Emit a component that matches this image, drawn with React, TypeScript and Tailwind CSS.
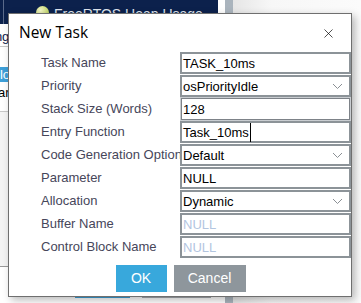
import { X } from 'lucide-react';

interface FieldData {
    label: string;
    value: string;
    kind: 'text' | 'select' | 'placeholder' | 'edit' | 'cursor';
}

const fields: FieldData[] = [
    { label: 'Task Name', value: 'TASK_10ms', kind: 'text' },
    { label: 'Priority', value: 'osPriorityIdle', kind: 'select' },
    { label: 'Stack Size (Words)', value: '128', kind: 'edit' },
    { label: 'Entry Function', value: 'Task_10ms', kind: 'cursor' },
    { label: 'Code Generation Option', value: 'Default', kind: 'select' },
    { label: 'Parameter', value: 'NULL', kind: 'text' },
    { label: 'Allocation', value: 'Dynamic', kind: 'select' },
    { label: 'Buffer Name', value: 'NULL', kind: 'placeholder' },
    { label: 'Control Block Name', value: 'NULL', kind: 'placeholder' },
];

function Chevron() {
    return (
        <svg width="11" height="7" viewBox="0 0 11 7" className="mr-[6px] shrink-0">
            <path d="M1 1 L5.5 5.5 L10 1" fill="none" stroke="#8a8f94" strokeWidth="1" />
        </svg>
    );
}

function Field({ field }: { field: FieldData }) {
    const box =
        field.kind === 'edit'
            ? 'border border-[#7d8288] outline outline-1 outline-[#c9cdd1] ml-[1px] mr-[1px]'
            : 'border-2 border-[#8c9398]';
    return (
        <div className="flex items-center h-[22px]">
            <div className="w-[171px] shrink-0 pl-[32px] whitespace-nowrap overflow-hidden text-[13px] text-[#46465a]">
                {field.label}
            </div>
            <div className={`flex-1 h-full flex items-center justify-between bg-white ${box}`}>
                <span
                    className={`pl-[1px] text-[13px] leading-none flex items-center ${
                        field.kind === 'placeholder' ? 'text-[#b3c5df]' : 'text-black'
                    }`}
                >
                    {field.value}
                    {field.kind === 'cursor' && <span className="inline-block w-px h-[19px] bg-black ml-px" />}
                </span>
                {field.kind === 'select' && <Chevron />}
            </div>
        </div>
    );
}

export default function App() {
    return (
        <div
            className="relative w-[361px] h-[303px] overflow-hidden bg-white"
            style={{ fontFamily: '"Liberation Sans", Arial, sans-serif' }}
        >
            {/* app behind the dialog */}
            <div className="flex h-full">
                <div className="w-[225px] flex flex-col">
                    <div className="h-[24px] w-[218px] bg-[#0c214c] flex items-start">
                        <div className="w-px h-full bg-[#5a6a8a] ml-[3px]" />
                        <div className="ml-[32px] mt-[6px] w-[13px] h-[13px] rounded-full bg-[radial-gradient(circle_at_35%_35%,#f4f7c8,#a8c43a)]" />
                        <span className="ml-[5px] mt-[4px] text-[14px] text-[#dfe4ec]">FreeRTOS Heap Usage</span>
                    </div>
                    <div className="h-[23px] border-b border-[#c8c8c8] text-[13px] text-[#0c214c] pt-[3px] -ml-[8px]">
                        ing
                    </div>
                    <div className="h-[20px]" />
                    <div className="h-[15px] w-[40px] bg-[#3d9fd8] text-white text-[13px] leading-[15px] -ml-[3px]">
                        llo
                    </div>
                    <div className="h-[30px] border-b border-[#c8c8c8] text-[13px] text-black pt-[1px] -ml-[2px]">
                        ar
                    </div>
                    <div className="h-[155px] bg-[#f4f4f4] border-b border-[#9a9a9a]" />
                    <div className="flex-1 flex items-start bg-white">
                        <div className="mt-[27px] ml-[75px] w-[55px] h-[4px] bg-[#3d9fd8]" />
                        <div className="mt-[27px] ml-[12px] w-[69px] h-[4px] bg-[#a5abb0]" />
                    </div>
                </div>
                <div className="w-[8px] bg-[#aab4bd]" />
                <div className="flex-1 bg-[linear-gradient(90deg,#e6e6e6,#f7f7f7_30%,#fbfbfb)]" />
            </div>

            {/* dialog */}
            <div className="absolute left-[8px] top-[13px] w-[344px] h-[284px] bg-white border border-[#6f6f6f] shadow-[3px_3px_8px_rgba(0,0,0,0.28)] flex flex-col">
                <div className="flex items-center justify-between h-[38px] pl-[10px] pr-[15px]">
                    <span
                        className="text-[15.5px] text-black"
                        style={{ fontFamily: '"Open Sans", "Noto Sans", sans-serif' }}
                    >
                        New Task
                    </span>
                    <X className="w-[15px] h-[15px] text-black" strokeWidth={1.1} />
                </div>
                <div className="flex flex-col gap-[1px]">
                    {fields.map((field, index) => (
                        <Field key={index} field={field} />
                    ))}
                </div>
                <div className="flex justify-center gap-[7px] mt-[7px] pl-[1px]">
                    <button className="w-[51px] h-[27px] bg-[#38a8dc] text-white text-[14px]">OK</button>
                    <button className="w-[72px] h-[27px] bg-[#8e969c] text-white text-[14px]">Cancel</button>
                </div>
            </div>
        </div>
    );
}
